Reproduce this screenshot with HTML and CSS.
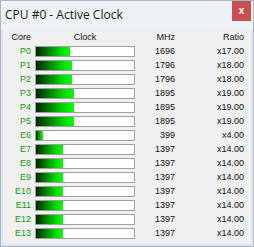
FILE: index.html
```html
<!DOCTYPE html>
<html>
<head>
<meta charset="utf-8">
<link rel="stylesheet" href="styles.css">
</head>
<body>
<div class="window">
  <div class="titlebar">
    <span class="title">CPU #0 - Active Clock</span>
    <span class="close">x</span>
  </div>
  <div class="content">
    <div class="grid">
      <div class="h lbl">Core</div>
      <div class="h clk">Clock</div>
      <div class="h num">MHz</div>
      <div class="h num">Ratio</div>

      <div class="lbl core">P0</div><div class="bar"><div class="fill" style="width:34px"></div></div><div class="num">1696</div><div class="num">x17.00</div>
      <div class="lbl core">P1</div><div class="bar"><div class="fill" style="width:36px"></div></div><div class="num">1796</div><div class="num">x18.00</div>
      <div class="lbl core">P2</div><div class="bar"><div class="fill" style="width:36px"></div></div><div class="num">1796</div><div class="num">x18.00</div>
      <div class="lbl core">P3</div><div class="bar"><div class="fill" style="width:38px"></div></div><div class="num">1895</div><div class="num">x19.00</div>
      <div class="lbl core">P4</div><div class="bar"><div class="fill" style="width:38px"></div></div><div class="num">1895</div><div class="num">x19.00</div>
      <div class="lbl core">P5</div><div class="bar"><div class="fill" style="width:38px"></div></div><div class="num">1895</div><div class="num">x19.00</div>
      <div class="lbl core">E6</div><div class="bar"><div class="fill" style="width:7px"></div></div><div class="num">399</div><div class="num">x4.00</div>
      <div class="lbl core">E7</div><div class="bar"><div class="fill" style="width:27px"></div></div><div class="num">1397</div><div class="num">x14.00</div>
      <div class="lbl core">E8</div><div class="bar"><div class="fill" style="width:27px"></div></div><div class="num">1397</div><div class="num">x14.00</div>
      <div class="lbl core">E9</div><div class="bar"><div class="fill" style="width:27px"></div></div><div class="num">1397</div><div class="num">x14.00</div>
      <div class="lbl core">E10</div><div class="bar"><div class="fill" style="width:27px"></div></div><div class="num">1397</div><div class="num">x14.00</div>
      <div class="lbl core">E11</div><div class="bar"><div class="fill" style="width:27px"></div></div><div class="num">1397</div><div class="num">x14.00</div>
      <div class="lbl core">E12</div><div class="bar"><div class="fill" style="width:27px"></div></div><div class="num">1397</div><div class="num">x14.00</div>
      <div class="lbl core">E13</div><div class="bar"><div class="fill" style="width:27px"></div></div><div class="num">1397</div><div class="num">x14.00</div>
    </div>
  </div>
</div>
</body>
</html>
```

FILE: styles.css
```css
html, body {
  margin: 0;
  padding: 0;
  background: #f0f0f0;
}
.window {
  width: 254px;
  height: 247px;
  box-sizing: border-box;
  border: 1px solid #a9b6c6;
  background: #dde5ee;
  display: flex;
  flex-direction: column;
  font-family: "Liberation Sans", Arial, sans-serif;
  overflow: hidden;
}
.titlebar {
  height: 28px;
  display: flex;
  align-items: flex-start;
  justify-content: space-between;
  background: #eef2f7;
  flex: none;
}
.title {
  font-family: "Open Sans", "Noto Sans", sans-serif;
  font-size: 12px;
  color: #1a1a1a;
  padding: 6px 0 0 4px;
  line-height: 16px;
}
.close {
  width: 19px;
  height: 20px;
  margin-right: 2px;
  background: #c75050;
  color: #fff;
  font-weight: bold;
  font-size: 10px;
  display: flex;
  align-items: center;
  justify-content: center;
  line-height: 1;
}
.content {
  flex: 1;
  background: #f0f0f0;
  margin: 0 2px 2px 2px;
  padding-top: 1px;
}
.grid {
  display: grid;
  grid-template-columns: 28px 104px 40px 69px;
  grid-auto-rows: 14px;
  align-items: center;
  font-size: 9px;
  color: #111;
}
.grid > .bar { margin-left: 4px; }
.h { color: #111; }
.lbl { text-align: right; }
.clk { text-align: center; padding-left: 4px; }
.num { text-align: right; }
.core { color: #169c06; }
.bar {
  height: 11px;
  box-sizing: border-box;
  border: 1px solid #a0a0a0;
  background: #fff;
  display: flex;
}
.fill {
  height: 100%;
  background: linear-gradient(to right, #002400, #00d800 72%, #00ff00);
}
```
